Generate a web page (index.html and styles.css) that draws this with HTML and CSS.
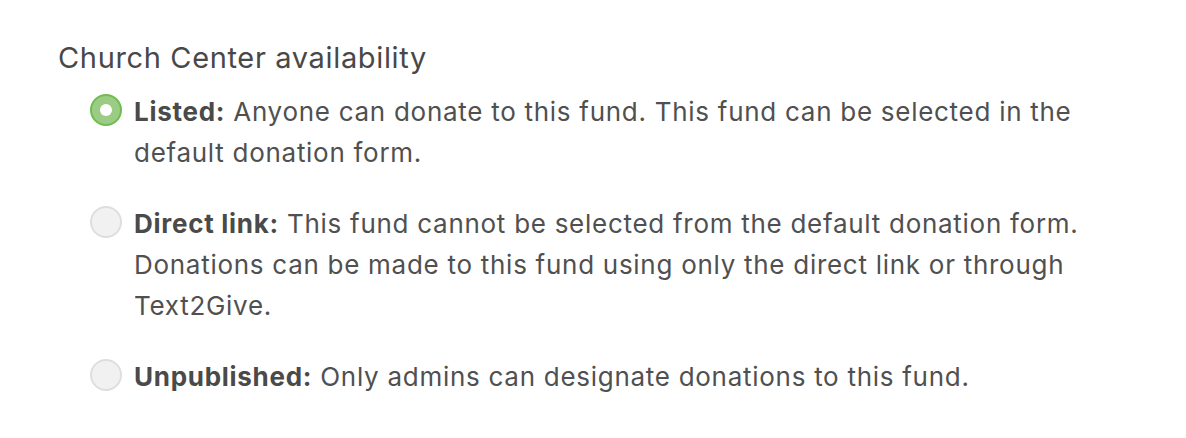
FILE: index.html
```html
<!DOCTYPE html>
<html lang="en">
<head>
<meta charset="utf-8">
<link rel="stylesheet" href="styles.css">
</head>
<body>
<section class="field">
  <h2 class="field-label">Church Center availability</h2>
  <div class="options">
    <label class="option">
      <span class="radio radio--checked"><span class="dot"></span></span>
      <span class="option-text"><strong>Listed:</strong> Anyone can donate to this fund. This fund can be selected in the default donation form.</span>
    </label>
    <label class="option">
      <span class="radio"></span>
      <span class="option-text"><strong>Direct link:</strong> This fund cannot be selected from the default donation form. Donations can be made to this fund using only the direct link or through Text2Give.</span>
    </label>
    <label class="option">
      <span class="radio"></span>
      <span class="option-text"><strong>Unpublished:</strong> Only admins can designate donations to this fund.</span>
    </label>
  </div>
</section>
</body>
</html>
```

FILE: styles.css
```css
* { box-sizing: border-box; }
body {
  margin: 0;
  background: #ffffff;
  font-family: Inter, "Liberation Sans", Arial, sans-serif;
  color: #505050;
}
.field {
  padding: 39px 0 0 58px;
}
.field-label {
  margin: 0 0 14px 0;
  font-size: 29px;
  font-weight: 400;
  letter-spacing: 0.65px;
  line-height: 38px;
  color: #484848;
}
.options {
  display: flex;
  flex-direction: column;
  gap: 30px;
  padding-left: 32px;
}
.option {
  display: flex;
  align-items: flex-start;
  gap: 12px;
}
.radio {
  flex: none;
  width: 32px;
  height: 32px;
  margin-top: 3px;
  border-radius: 50%;
  border: 2px solid #dedede;
  background: #f1f1f1;
  display: flex;
  align-items: center;
  justify-content: center;
}
.radio--checked {
  border-color: #6dbd4f;
  background: #9ccb85;
}
.dot {
  width: 12px;
  height: 12px;
  border-radius: 50%;
  background: #ffffff;
}
.option-text {
  max-width: 990px;
  font-size: 26px;
  letter-spacing: 0.72px;
  line-height: 41px;
}
.option-text strong {
  font-weight: 700;
  color: #4a4a4a;
}
```
